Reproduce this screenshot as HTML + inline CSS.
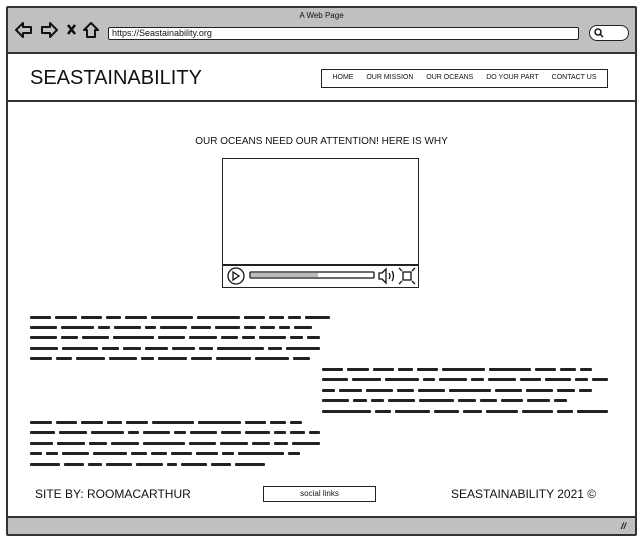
<!DOCTYPE html>
<html><head><meta charset="utf-8"><style>
*{margin:0;padding:0;box-sizing:border-box}
body{width:643px;height:542px;background:#fff;position:relative;overflow:hidden;font-family:"Liberation Sans",sans-serif;color:#111}
.frame{position:absolute;left:6px;top:6px;width:631px;height:530px;border:2px solid #333;border-radius:2px}
.top{position:absolute;left:8px;top:8px;width:627px;height:46px;background:#c0c0c0;border-bottom:2px solid #333}
.bot{position:absolute;left:8px;top:516px;width:627px;height:18px;background:#c0c0c0;border-top:2px solid #333}
.abs{position:absolute}
.url{left:108px;top:27px;width:471px;height:13px;border:1.5px solid #222;background:#fff;border-radius:2px;font-size:9px;line-height:10px;padding-left:3px}
.search{left:589px;top:25px;width:40px;height:16px;border:1.5px solid #222;border-radius:8px;background:#fff}
.hr{left:8px;top:100px;width:627px;height:2px;background:#333}
.nav{left:321px;top:69px;width:287px;height:19px;border:1.5px solid #222;font-size:7px;line-height:16px;display:flex;justify-content:space-around;padding:0 4px}
.line{position:absolute;height:10.5px;display:flex;gap:4px;align-items:center}
.line i{display:block;height:3.5px;background:#222;border-radius:1px;flex:1 1 auto}
.social{left:263px;top:486px;width:113px;height:16px;border:1.5px solid #222;font-size:8px;text-align:center;line-height:13px}
</style></head><body>
<div class="top"></div>
<div class="bot"></div>
<div class="frame"></div>
<div class="abs" style="left:0;width:643px;top:11px;text-align:center;font-size:8px">A Web Page</div>
<svg class="abs" style="left:14px;top:20px" width="90" height="20" viewBox="0 0 90 20" fill="none" stroke="#111" stroke-width="2" stroke-linejoin="round">
<path d="M2 10 L9 3 V7 H17 V13 H9 V17 Z"/>
<path d="M43 10 L36 3 V7 H28 V13 H36 V17 Z"/>
<path d="M54 5 L61 14 M61 5 L54 14" stroke-width="2.6"/>
<path d="M70 10 L77 3 L84 10 H81 V17 H73 V10 Z"/>
</svg>
<div class="abs url">https://Seastainability.org</div>
<div class="abs search"><svg width="12" height="12" style="position:absolute;left:3px;top:1px"><circle cx="5" cy="5" r="3" fill="none" stroke="#111" stroke-width="1.5"/><path d="M7 7 L10 10" stroke="#111" stroke-width="1.5"/></svg></div>
<div class="abs" style="left:30px;top:67px;font-size:20px">SEASTAINABILITY</div>
<div class="abs nav"><span>HOME</span><span>OUR MISSION</span><span>OUR OCEANS</span><span>DO YOUR PART</span><span>CONTACT US</span></div>
<div class="abs hr"></div>
<div class="abs" style="left:0;width:643px;top:136px;text-align:center;font-size:10px">OUR OCEANS NEED OUR ATTENTION! HERE IS WHY</div>
<div class="abs" style="left:222px;top:158px;width:197px;height:130px;border:1.5px solid #222"></div>
<div class="abs" style="left:222px;top:264px;width:197px;height:1.5px;background:#222"></div>
<svg class="abs" style="left:222px;top:264px" width="197" height="24" fill="none" stroke="#111" stroke-width="1.3">
<circle cx="14" cy="12" r="8"/><path d="M11 8 L17 12 L11 16 Z"/>
<rect x="28" y="8" width="124" height="6" rx="1"/><rect x="29" y="9" width="67" height="4" fill="#bbb" stroke="none"/>
<path d="M157 9 H160 L164 5 V19 L160 15 H157 Z"/><path d="M167 9 Q169 12 167 15 M170 7 Q173 12 170 17"/>
<rect x="181" y="8" width="8" height="8"/><path d="M177 4 L180 7 M193 4 L190 7 M177 20 L180 17 M193 20 L190 17"/>
</svg>
<!-- block 1 -->
<div class="line" style="left:30px;top:312px;width:300px"><i style="width:15px"></i><i style="width:15px"></i><i style="width:15px"></i><i style="width:9px"></i><i style="width:15px"></i><i style="width:36px"></i><i style="width:36px"></i><i style="width:15px"></i><i style="width:9px"></i><i style="width:6px"></i><i style="width:19px"></i></div>
<div class="line" style="left:30px;top:322px;width:282px"><i style="width:22px"></i><i style="width:28px"></i><i style="width:6px"></i><i style="width:22px"></i><i style="width:6px"></i><i style="width:22px"></i><i style="width:15px"></i><i style="width:20px"></i><i style="width:6px"></i><i style="width:10px"></i><i style="width:6px"></i><i style="width:13px"></i></div>
<div class="line" style="left:30px;top:332px;width:290px"><i style="width:20px"></i><i style="width:10px"></i><i style="width:20px"></i><i style="width:34px"></i><i style="width:20px"></i><i style="width:20px"></i><i style="width:10px"></i><i style="width:6px"></i><i style="width:20px"></i><i style="width:6px"></i><i style="width:6px"></i></div>
<div class="line" style="left:30px;top:343px;width:290px"><i style="width:20px"></i><i style="width:28px"></i><i style="width:10px"></i><i style="width:10px"></i><i style="width:15px"></i><i style="width:15px"></i><i style="width:6px"></i><i style="width:40px"></i><i style="width:6px"></i><i style="width:26px"></i></div>
<div class="line" style="left:30px;top:353px;width:280px"><i style="width:15px"></i><i style="width:10px"></i><i style="width:22px"></i><i style="width:22px"></i><i style="width:6px"></i><i style="width:22px"></i><i style="width:15px"></i><i style="width:28px"></i><i style="width:28px"></i><i style="width:10px"></i></div>
<!-- block 2 -->
<div class="line" style="left:322px;top:364px;width:270px"><i style="width:15px"></i><i style="width:15px"></i><i style="width:15px"></i><i style="width:9px"></i><i style="width:15px"></i><i style="width:36px"></i><i style="width:36px"></i><i style="width:15px"></i><i style="width:9px"></i><i style="width:6px"></i></div>
<div class="line" style="left:322px;top:374px;width:286px"><i style="width:20px"></i><i style="width:22px"></i><i style="width:28px"></i><i style="width:6px"></i><i style="width:22px"></i><i style="width:6px"></i><i style="width:22px"></i><i style="width:15px"></i><i style="width:20px"></i><i style="width:6px"></i><i style="width:10px"></i></div>
<div class="line" style="left:322px;top:385px;width:270px"><i style="width:6px"></i><i style="width:15px"></i><i style="width:20px"></i><i style="width:10px"></i><i style="width:20px"></i><i style="width:34px"></i><i style="width:20px"></i><i style="width:20px"></i><i style="width:10px"></i><i style="width:6px"></i></div>
<div class="line" style="left:322px;top:395px;width:245px"><i style="width:20px"></i><i style="width:6px"></i><i style="width:6px"></i><i style="width:20px"></i><i style="width:28px"></i><i style="width:10px"></i><i style="width:10px"></i><i style="width:15px"></i><i style="width:15px"></i><i style="width:6px"></i></div>
<div class="line" style="left:322px;top:406px;width:286px"><i style="width:40px"></i><i style="width:6px"></i><i style="width:26px"></i><i style="width:15px"></i><i style="width:10px"></i><i style="width:22px"></i><i style="width:22px"></i><i style="width:6px"></i><i style="width:22px"></i></div>
<!-- block 3 -->
<div class="line" style="left:30px;top:417px;width:272px"><i style="width:15px"></i><i style="width:15px"></i><i style="width:15px"></i><i style="width:9px"></i><i style="width:15px"></i><i style="width:36px"></i><i style="width:36px"></i><i style="width:15px"></i><i style="width:9px"></i><i style="width:6px"></i></div>
<div class="line" style="left:30px;top:427px;width:290px"><i style="width:20px"></i><i style="width:22px"></i><i style="width:28px"></i><i style="width:6px"></i><i style="width:22px"></i><i style="width:6px"></i><i style="width:22px"></i><i style="width:15px"></i><i style="width:20px"></i><i style="width:6px"></i><i style="width:10px"></i><i style="width:6px"></i></div>
<div class="line" style="left:30px;top:438px;width:290px"><i style="width:15px"></i><i style="width:20px"></i><i style="width:10px"></i><i style="width:20px"></i><i style="width:34px"></i><i style="width:20px"></i><i style="width:20px"></i><i style="width:10px"></i><i style="width:6px"></i><i style="width:20px"></i></div>
<div class="line" style="left:30px;top:448px;width:270px"><i style="width:6px"></i><i style="width:6px"></i><i style="width:20px"></i><i style="width:28px"></i><i style="width:10px"></i><i style="width:10px"></i><i style="width:15px"></i><i style="width:15px"></i><i style="width:6px"></i><i style="width:40px"></i><i style="width:6px"></i></div>
<div class="line" style="left:30px;top:459px;width:235px"><i style="width:26px"></i><i style="width:15px"></i><i style="width:10px"></i><i style="width:22px"></i><i style="width:22px"></i><i style="width:6px"></i><i style="width:22px"></i><i style="width:15px"></i><i style="width:26px"></i></div>
<div class="abs" style="left:35px;top:487px;font-size:12px">SITE BY: ROOMACARTHUR</div>
<div class="abs social">social links</div>
<div class="abs" style="left:451px;top:487px;font-size:12px">SEASTAINABILITY 2021 ©</div>
<div class="abs" style="left:621px;top:521px;font-size:9px;font-style:italic;font-weight:bold">//</div>
</body></html>
